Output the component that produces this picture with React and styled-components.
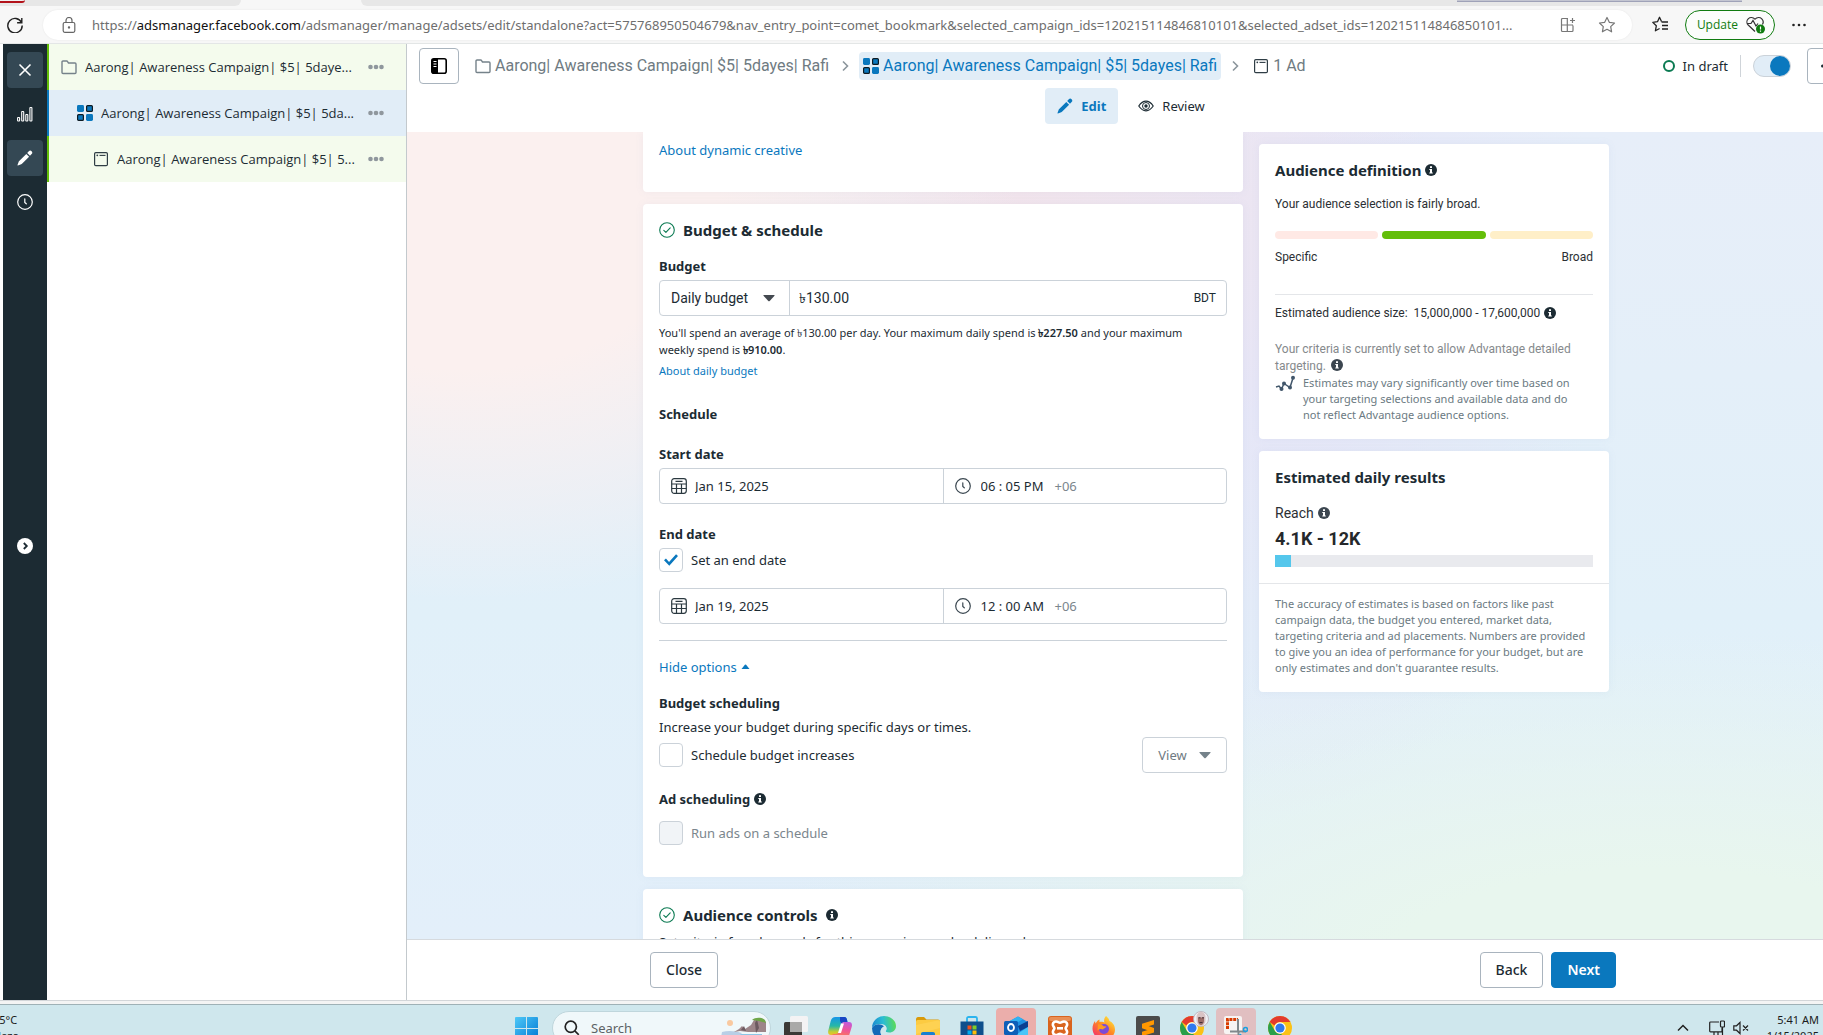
import React, { useState } from "react";
import styled, { createGlobalStyle, css } from "styled-components";

const ui = '"Noto Sans", "Open Sans", sans-serif';
const plain = 'Roboto, "Noto Sans", sans-serif';
const ink = "#1c2b33";
const muted = "#6f7b82";
const blue = "#0a78be";
const line = "#cbd2d9";

const GlobalStyle = createGlobalStyle`
  *, *::before, *::after { box-sizing: border-box; }
  body { margin: 0; background: #fff; color: ${ink}; font: 13px/20px ${ui}; overflow: hidden; }
  button, input, select { font: inherit; color: inherit; margin: 0; }
  button { cursor: pointer; }
  p, h2, h3 { margin: 0; }
  a { color: ${blue}; text-decoration: none; }
  svg { display: block; flex: none; }
`;

const Screen = styled.div`
  display: flex;
  flex-direction: column;
  height: 100vh;
  overflow: hidden;
`;

/* ---------- browser chrome ---------- */
const TabStrip = styled.div`
  display: flex;
  justify-content: space-between;
  height: 6px;
  flex: none;
  background: #f7f7f7;
`;
const TabGroup = styled.div`
  background: #e7e7e7;
  border-radius: ${(p) => (p.$end ? "0 0 0 6px" : "0 0 6px 0")};
  ${(p) => (p.$end ? "flex: 1; margin-left: 120px;" : "width: 241px;")}
  display: flex;
  justify-content: ${(p) => (p.$end ? "flex-end" : "flex-start")};
`;
const RedCorner = styled.span`
  width: 25px;
  height: 3px;
  background: #f2f2f2;
  border-bottom: 2px solid #b3131b;
  border-radius: 0 0 12px 0;
`;
const WindowEdge = styled.span`
  width: 285px;
  height: 2px;
  margin-right: 81px;
  background: #c3c5d1;
  border-bottom: 1px solid #9fa2b8;
`;
const AddressBar = styled.div`
  display: flex;
  align-items: center;
  flex: none;
  height: 38px;
  padding: 0 16px 0 7px;
  background: #f7f7f7;
  border-bottom: 1px solid #e3e6e6;
`;
const BareButton = styled.button`
  display: inline-flex;
  align-items: center;
  justify-content: center;
  padding: 0;
  border: 0;
  background: none;
`;
const UrlPill = styled.div`
  display: flex;
  align-items: center;
  flex: 1;
  min-width: 0;
  height: 30px;
  margin: 0 20px;
  padding: 0 16px 0 18px;
  border-radius: 15px;
  background: #fff;
  box-shadow: 0 0 2px rgba(0, 0, 0, 0.08);
`;
const Url = styled.div`
  flex: 1;
  margin-left: 15px;
  overflow: hidden;
  white-space: nowrap;
  color: #6e6e6e;
  b { font-weight: 400; color: #111; }
`;
const PillActions = styled.div`
  display: flex;
  gap: 22px;
`;
const UpdateButton = styled.button`
  display: flex;
  align-items: center;
  gap: 8px;
  height: 30px;
  margin: 0 16px;
  padding: 0 8px 0 11px;
  border: 1px solid #107c10;
  border-radius: 15px;
  background: #fbfdfb;
  color: #107c10;
  font: 12px/20px "Open Sans", sans-serif;
`;

/* ---------- app shell ---------- */
const Workspace = styled.div`
  display: flex;
  flex: 1;
  min-height: 0;
  padding-left: 3px;
  overflow: hidden;
`;
const Rail = styled.nav`
  display: flex;
  flex-direction: column;
  align-items: center;
  gap: 8px;
  flex: none;
  width: 44px;
  padding-top: 8px;
  background: ${ink};
`;
const RailButton = styled.button`
  display: flex;
  align-items: center;
  justify-content: center;
  width: 36px;
  height: 36px;
  padding: 0;
  border: 0;
  border-radius: 4px;
  background: ${(p) => (p.$on ? "#344854" : "transparent")};
  color: #fff;
`;
const RailSpacer = styled.div`
  flex: 0 1 292px;
`;
const Tree = styled.aside`
  flex: none;
  width: 360px;
  border-right: 1px solid #c3c9cd;
  background: #fff;
`;
const TreeRow = styled.div`
  display: flex;
  align-items: center;
  height: 46px;
  padding: 0 22px 0 ${(p) => 12 + p.$depth * 16}px;
  border-left: 2px solid ${(p) => (p.$selected ? blue : "#63be09")};
  background: ${(p) => (p.$selected ? "#e1edf7" : "#f4fbed")};
`;
const TreeName = styled.span`
  flex: 1;
  margin-left: 8px;
  min-width: 0;
  overflow: hidden;
  white-space: nowrap;
  font-family: "Open Sans", sans-serif;
`;

const Panel = styled.main`
  display: flex;
  flex-direction: column;
  flex: 1;
  min-width: 0;
  margin-right: -36px;
`;
const PanelHeader = styled.header`
  flex: none;
  padding: 4px 12px 8px;
  background: #fff;
`;
const CrumbRow = styled.div`
  display: flex;
  align-items: center;
  height: 36px;
`;
const SquareButton = styled.button`
  display: flex;
  align-items: center;
  justify-content: ${(p) => (p.$start ? "flex-start" : "center")};
  flex: none;
  width: 40px;
  height: 36px;
  padding: 0 ${(p) => (p.$start ? "12px" : "0")};
  border: 1px solid #a9b4be;
  border-radius: 4px;
  background: #fff;
`;
const Crumbs = styled.div`
  display: flex;
  align-items: center;
  gap: 8px;
  flex: 1;
  min-width: 0;
  margin-left: 12px;
`;
const Crumb = styled.a`
  display: flex;
  align-items: center;
  gap: 4px;
  height: 28px;
  padding: 0 ${(p) => (p.$current ? 4 : 2)}px 0 4px;
  border-radius: 4px;
  white-space: nowrap;
  font: 16px/28px ${plain};
  color: ${(p) => (p.$current ? blue : muted)};
  background: ${(p) => (p.$current ? "#e1edf7" : "transparent")};
`;
const Status = styled.div`
  display: flex;
  align-items: center;
  gap: 8px;
  height: 22px;
  padding-right: 12px;
  margin-right: 12px;
  border-right: 1px solid #cfd4d9;
`;
const StatusRing = styled.span`
  width: 12px;
  height: 12px;
  border: 2px solid #0b7a52;
  border-radius: 50%;
`;
const Toggle = styled.input`
  appearance: none;
  flex: none;
  display: flex;
  justify-content: flex-end;
  width: 38px;
  height: 22px;
  margin: 0 16px 0 0;
  border: 1px solid ${line};
  border-radius: 11px;
  background: #e1edf7;
  &:not(:checked) { justify-content: flex-start; }
  &::after {
    content: "";
    width: 20px;
    height: 20px;
    border-radius: 50%;
    background: ${blue};
  }
`;
const ModeRow = styled.div`
  display: flex;
  justify-content: center;
  gap: 8px;
  margin-top: 4px;
  padding-right: 4px;
`;
const ModeButton = styled.button`
  display: flex;
  align-items: center;
  gap: 8px;
  height: 36px;
  padding: 0 12px;
  border: 0;
  border-radius: 4px;
  background: ${(p) => (p.$on ? "#e1edf7" : "transparent")};
  color: ${(p) => (p.$on ? blue : ink)};
  font-weight: ${(p) => (p.$on ? 700 : 400)};
`;

const Canvas = styled.div`
  display: flex;
  justify-content: center;
  gap: 16px;
  flex: 1;
  min-height: 0;
  padding-right: 14px;
  overflow: hidden;
  background:
    radial-gradient(ellipse 560px 420px at 4% 6%, #fbf0ef 45%, rgba(251, 240, 239, 0) 100%),
    radial-gradient(ellipse 420px 260px at 42% 8%, #f2e4ec 0%, rgba(242, 228, 236, 0) 100%),
    radial-gradient(ellipse 320px 520px at 60% 20%, #e6e6f7 20%, rgba(230, 230, 247, 0) 100%),
    radial-gradient(ellipse 900px 340px at 86% 104%, #e8f6ee 30%, rgba(232, 246, 238, 0) 100%),
    linear-gradient(180deg, #e7eef9 0%, #e1f0f9 60%, #e3effa 100%);
`;
const FormColumn = styled.div`
  display: flex;
  flex-direction: column;
  gap: 12px;
  flex: none;
  width: 600px;
`;
const SideColumn = styled.aside`
  display: flex;
  flex-direction: column;
  gap: 12px;
  flex: none;
  width: 350px;
  padding-top: 12px;
`;
const Card = styled.section`
  flex: none;
  padding: ${(p) => p.$pad || "16px"};
  border-radius: ${(p) => (p.$cut ? "0 0 4px 4px" : "4px")};
  background: #fff;
  box-shadow: 0 0 8px rgba(120, 140, 190, 0.08);
`;
const CardTitle = styled.h2`
  display: flex;
  align-items: center;
  gap: ${(p) => p.$gap || 8}px;
  font: 700 15px/20px ${ui};
`;
const Label = styled.h3`
  display: flex;
  align-items: center;
  gap: 4px;
  margin-top: ${(p) => p.$top}px;
  font: 700 13px/20px ${ui};
`;
const FieldRow = styled.div`
  display: flex;
  height: 36px;
  margin-top: ${(p) => p.$top || 4}px;
  border: 1px solid ${line};
  border-radius: 4px;
`;
const FieldCell = styled.div`
  display: flex;
  align-items: center;
  gap: ${(p) => p.$gap || 8}px;
  flex: 1;
  min-width: 0;
  padding: 0 11px;
  & + & { border-left: 1px solid ${line}; }
`;
const SelectCell = styled.div`
  display: flex;
  align-items: center;
  flex: none;
  width: 130px;
  padding: 0 14px 0 11px;
  border-right: 1px solid ${line};
`;
const Select = styled.select`
  appearance: none;
  flex: 1;
  min-width: 0;
  padding: 0;
  border: 0;
  outline: 0;
  background: none;
  font: 14px/20px ${plain};
`;
const TextInput = styled.input`
  width: ${(p) => p.$width || "100%"};
  min-width: 0;
  padding: 0;
  border: 0;
  outline: 0;
  background: none;
  ${(p) => p.$plain && css`font: 14px/20px ${plain};`}
`;
const AmountCell = styled(FieldCell)`
  padding: 0 10px 0 9px;
`;
const Currency = styled.span`
  font: 12px/20px ${plain};
`;
const Zone = styled.span`
  color: #7b868d;
`;
const Note = styled.p`
  margin-top: 8px;
  padding-right: 16px;
  font-size: 11px;
  line-height: 17px;
  b { font-weight: 600; }
`;
const SmallLink = styled.a`
  display: block;
  margin-top: 4px;
  font-size: 11px;
  line-height: 18px;
`;
const Rule = styled.hr`
  height: 1px;
  margin: ${(p) => p.$top}px 0 0;
  border: 0;
  background: ${(p) => p.$color || line};
`;
const TextButton = styled.button`
  display: flex;
  align-items: center;
  gap: 4px;
  margin-top: 16px;
  padding: 0;
  border: 0;
  background: none;
  color: ${blue};
`;
const Para = styled.p`
  margin-top: ${(p) => p.$top}px;
`;
const CheckLabel = styled.label`
  display: flex;
  align-items: center;
  gap: 8px;
  flex: 1;
  margin-top: ${(p) => p.$top || 0}px;
  color: ${(p) => (p.$off ? "#7b868d" : ink)};
`;
const CheckBox = styled.input`
  appearance: none;
  display: grid;
  place-items: center;
  width: 24px;
  height: 24px;
  border: 1px solid ${line};
  border-radius: 4px;
  background: #fff;
  &:disabled { background: #f1f4f7; }
  &:checked::after {
    content: "";
    width: 14px;
    height: 12px;
    background: ${blue};
    clip-path: polygon(0 52%, 14% 38%, 36% 66%, 86% 2%, 100% 16%, 38% 98%);
  }
`;
const SplitRow = styled.div`
  display: flex;
  align-items: center;
  height: 36px;
`;
const ViewButton = styled.button`
  display: flex;
  align-items: center;
  justify-content: center;
  gap: 12px;
  width: 85px;
  height: 36px;
  border: 1px solid ${line};
  border-radius: 4px;
  background: #fff;
  color: ${muted};
`;

const PlainText = styled.p`
  display: ${(p) => (p.$flex ? "flex" : "block")};
  align-items: center;
  justify-content: ${(p) => (p.$between ? "space-between" : "flex-start")};
  gap: 4px;
  margin-top: ${(p) => p.$top}px;
  font: ${(p) => p.$size || 12}px/${(p) => p.$lh || 20}px ${plain};
  color: ${(p) => (p.$muted ? "#85898c" : "#2b2f33")};
  svg { ${(p) => !p.$flex && "display: inline-block; vertical-align: -1px; margin-left: 2px;"} }
`;
const Meter = styled.div`
  display: flex;
  gap: 4px;
  margin-top: 17px;
`;
const MeterPart = styled.span`
  flex: 1;
  height: 8px;
  border-radius: 4px;
  background: ${(p) => p.$color};
`;
const FinePrint = styled.p`
  padding-right: ${(p) => (p.$inset ? 8 : 0)}px;
  font-size: 11px;
  line-height: 16px;
  color: #6b7a82;
`;
const HintRow = styled.div`
  display: flex;
  gap: 8px;
`;
const Figure = styled.p`
  margin-top: 4px;
  font: 700 18px/24px ${plain};
  color: #25282b;
`;
const Gauge = styled.div`
  height: 12px;
  margin-top: 4px;
  background: #e9eaee;
`;
const GaugeFill = styled.div`
  width: 5%;
  height: 12px;
  background: #55c7ec;
`;
const CardFooter = styled.div`
  margin: 16px -16px 0;
  padding: 12px 16px 0;
  border-top: 1px solid #e4e6e9;
`;

const PanelFooter = styled.footer`
  display: flex;
  justify-content: center;
  flex: none;
  height: 61px;
  padding-top: 12px;
  border-top: 1px solid #d6dade;
  background: #fff;
`;
const FooterInner = styled.div`
  display: flex;
  gap: 8px;
  width: 966px;
`;
const FooterButton = styled.button`
  height: 36px;
  padding: 0 15px;
  border: 1px solid ${(p) => (p.$primary ? blue : "#a9b4be")};
  border-radius: 4px;
  background: ${(p) => (p.$primary ? blue : "#fff")};
  color: ${(p) => (p.$primary ? "#fff" : ink)};
  font: ${(p) => (p.$primary ? 600 : 500)} 14px/20px ${ui};
  margin-right: ${(p) => (p.$push ? "auto" : "0")};
`;

/* ---------- desktop taskbar ---------- */
const WindowBottom = styled.div`
  flex: none;
  height: 4px;
  background: #f4f4f4;
  border-top: 1px solid #d3d6d9;
`;
const Taskbar = styled.div`
  flex: none;
  height: 31px;
  overflow: hidden;
  background: #cfe7ed;
  border-top: 1px solid #9fb1b6;
`;
const TaskbarInner = styled.div`
  display: grid;
  grid-template-columns: 1fr auto 1fr;
  align-items: center;
  height: 46px;
`;
const Weather = styled.div`
  margin-left: -7px;
  font-size: 11px;
  line-height: 16px;
  color: #1b1b1b;
`;
const TaskCenter = styled.div`
  display: flex;
  align-items: center;
  padding-right: 6px;
`;
const SearchBox = styled.label`
  display: flex;
  align-items: center;
  gap: 11px;
  width: 219px;
  height: 34px;
  margin: 0 3px 0 14px;
  padding: 0 2px 0 11px;
  border: 1px solid #bfd6dc;
  border-radius: 17px;
  background: #f0f8fa;
  input::placeholder { color: #5d6366; opacity: 1; }
`;
const TaskApp = styled.button`
  display: flex;
  align-items: center;
  justify-content: center;
  width: 40px;
  height: 40px;
  margin: 0 2px;
  padding: 0;
  border: 0;
  border-radius: 4px;
  background: ${(p) => p.$tint || "none"};
`;
const Tray = styled.div`
  display: flex;
  align-items: center;
  justify-content: flex-end;
  padding-right: 4px;
`;
const TrayIcons = styled.div`
  display: flex;
  align-items: center;
  margin-right: 18px;
  gap: 8px;
  svg:first-child { margin-right: 10px; }
`;
const Clock = styled.div`
  text-align: right;
  font-size: 11px;
  line-height: 16px;
  color: #1b1b1b;
`;

/* ---------- icons ---------- */
const Svg = ({ s = 16, w, h, vb, children, ...rest }) => (
  <svg width={w || s} height={h || s} viewBox={vb || `0 0 ${w || s} ${h || s}`} fill="none" aria-hidden="true" {...rest}>
    {children}
  </svg>
);
const FolderIcon = () => (
  <Svg stroke="#75828a" strokeWidth="1.4" strokeLinejoin="round">
    <path d="M1 3a1 1 0 0 1 1-1h3.6c.5 0 .8.2 1 .6L7.5 4H14a1 1 0 0 1 1 1v8.5a1 1 0 0 1-1 1H2a1 1 0 0 1-1-1z" />
  </Svg>
);
const GridIcon = () => (
  <Svg>
    <rect x="0" y="0" width="7" height="7" rx="1.4" fill={blue} />
    <rect x="9.6" y=".6" width="5.8" height="5.8" rx="1" fill={blue} stroke="#0d1a22" strokeWidth="1.2" />
    <rect x=".6" y="9.6" width="5.8" height="5.8" rx="1" fill={blue} stroke="#0d1a22" strokeWidth="1.2" />
    <rect x="9" y="9" width="7" height="7" rx="1.4" fill={blue} />
  </Svg>
);
const AdIcon = () => (
  <Svg>
    <rect x="1.6" y="1.6" width="12.8" height="13" rx="1.2" stroke="#2f3d45" strokeWidth="1.2" />
    <circle cx="4.3" cy="4.3" r=".9" fill="#2f3d45" />
    <path d="M6.5 4.4h6" stroke="#2f3d45" strokeWidth="1.1" />
  </Svg>
);
const MoreDots = ({ c = "#8f979d", r = 2.3 }) => (
  <Svg>
    <g fill={c}><circle cx="2.5" cy="8" r={r} /><circle cx="8" cy="8" r={r} /><circle cx="13.5" cy="8" r={r} /></g>
  </Svg>
);
const ClockIcon = ({ c = "#3a4750" }) => (
  <Svg stroke={c} strokeWidth="1.2" strokeLinecap="round">
    <circle cx="8" cy="8" r="7.3" />
    <path d="M7.8 4.8v3.6l1.5 1.4" />
  </Svg>
);
const PencilIcon = ({ c }) => (
  <Svg>
    <path fill={c} d="M9.3 3.9 12.1 6.7 5 13.8a2 2 0 0 1-.8.5L.9 15.4a.3.3 0 0 1-.4-.4l1.2-3.2a2 2 0 0 1 .5-.8zM10.2 3 11.8 1.3a1.9 1.9 0 0 1 2.8 2.8L13 5.800z" />
  </Svg>
);
const CheckCircle = () => (
  <Svg stroke="#0b7a52" strokeWidth="1.1" strokeLinecap="round" strokeLinejoin="round">
    <circle cx="8" cy="8" r="7.3" /><path d="m4.800 8.400 2.100 2L11.200 5.800" />
  </Svg>
);
const InfoIcon = ({ c = ink }) => (
  <Svg s={12}>
    <circle cx="6" cy="6" r="6" fill={c} />
    <path d="M5 2.200h2v1.700H5zM4.300 4.900H7v3.700h.8v1H4.300v-1H5V5.900h-.7z" fill="#fff" />
  </Svg>
);
const Caret = ({ c = "#444950", up }) => (
  <Svg w={up ? 9 : 12} h={up ? 8 : 12} vb={up ? "0 0 8 8" : "0 0 12 12"}>
    {up ? <path d="M0 6 3.400 1.800a.8.800 0 0 1 1.200 0L8 6z" fill={c} />
        : <path d="M.8 3h10.400c.4 0 .5.400.3.700L6.700 9a1 1 0 0 1-1.400 0L.5 3.700C.3 3.400.4 3 .8 3z" fill={c} />}
  </Svg>
);
const CalendarIcon = () => (
  <Svg stroke="#2b3940" strokeWidth="1.2">
    <rect x=".7" y=".7" width="14.600" height="14.600" rx="2.500" />
    <path d="M4.500 3.300h7M.7 6h14.600M.7 10.500h14.600M5.500 6v9.300M10.500 6v9.300" />
  </Svg>
);
const CrumbChevron = () => (
  <Svg w={12} h={16}><path d="m4 3.500 4.500 4.500L4 12.500" stroke="#8b959c" strokeWidth="1.600" /></Svg>
);
const TrendIcon = () => (
  <Svg w={20} h={17} stroke="#41566a" strokeWidth="1.500">
    <path d="m1 12 3-1 2.500 3L9 8.500l6 4L18 3" />
    <g fill="#41566a" stroke="none"><circle cx="6.500" cy="14" r="2" /><circle cx="9" cy="8.500" r="2" /><circle cx="15" cy="12.500" r="2" /><circle cx="18" cy="2.800" r="2" /></g>
  </Svg>
);
const ChromeMark = () => (
  <>
    <circle cx="12" cy="12" r="12" fill="#fbc116" />
    <path d="M12 0a12 12 0 0 1 10.400 6H12a6 6 0 0 0-5.500 3.600L1.700 6A12 12 0 0 1 12 0z" fill="#e33b2e" />
    <path d="M1.700 5.900 7 15a6 6 0 0 0 7 2.700L11 24A12 12 0 0 1 1.700 5.900z" fill="#2a9f4b" />
    <circle cx="12" cy="12" r="5.800" fill="#fff" />
    <circle cx="12" cy="12" r="4.600" fill="#3079ee" />
  </>
);
const ChromeIcon = () => (
  <Svg s={24}><ChromeMark /></Svg>
);
const ChromeProfileIcon = () => (
  <Svg w={40} h={40}>
    <g transform="translate(8 8)"><ChromeMark /></g>
    <circle cx="29" cy="11" r="7.500" fill="#eef0f5" stroke="#b9a9b4" strokeWidth=".8" />
    <path d="M24.500 9c0-3 2-5 4.500-5s4.500 2 4.500 5v4c-.5 3-2.500 5-4.500 5s-4-2-4.500-5z" fill="#d9c3c4" />
    <path d="M26 9.500h6v3.500c0 2-1.500 4-3 4s-3-2-3-4z" fill="#9b6d68" /><path d="M26.500 9.800h2M30 9.800h2M27.500 14.500h3" stroke="#463036" />
  </Svg>
);

const treeRows = [
  { name: "Aarong| Awareness Campaign| $5| 5daye...", Icon: FolderIcon },
  { name: "Aarong| Awareness Campaign| $5| 5da...", Icon: GridIcon, selected: true },
  { name: "Aarong| Awareness Campaign| $5| 5...", Icon: AdIcon },
];

const taskApps = [
  { name: "Task view", icon: (
    <Svg s={24}><rect x="0" y="6" width="18" height="17" rx="1.500" fill="#3a3835" /><rect x="6" y="0" width="18" height="16" rx="1.500" fill="#f4f3f4" /><rect x="6" y="6" width="12" height="10" fill="#aaa9a8" /></Svg>) },
  { name: "Copilot", icon: (
    <Svg s={24}>
      <defs>
        <linearGradient id="cpA" x1="4" y1="0" x2="4" y2="20" gradientUnits="userSpaceOnUse"><stop stopColor="#1591f0" /><stop offset=".5" stopColor="#27b8a6" /><stop offset=".8" stopColor="#c9cf2f" /><stop offset="1" stopColor="#f7b42c" /></linearGradient>
        <linearGradient id="cpB" x1="20" y1="4" x2="16" y2="24" gradientUnits="userSpaceOnUse"><stop stopColor="#b45cf0" /><stop offset=".5" stopColor="#ef5498" /><stop offset="1" stopColor="#ff8a3c" /></linearGradient>
      </defs>
      <path d="M12 1h4.500c1.500 0 2 1 2.400 2.300L19.500 6h-3c-1.700 0-2.500 1-3 2.500L11.300 16c-.7 2-1.600 3-3.800 3H3C.5 19-.3 17 .3 14.500l2.500-9.700C3.500 2.300 5 1 7.500 1z" fill="url(#cpA)" />
      <path d="M12 1h4.500c1.500 0 2 1 2.400 2.300L19.500 6h-3c-1.700 0-2.200.5-3 2L12 5z" fill="#1a46c4" />
      <path d="M12 23H8c-1.800 0-2.300-1-2.700-2.300L4.500 18h3c2 0 3-1 3.600-3L13 8.500C13.500 7 14.600 6 16.500 6H21c2.500 0 3.400 2 2.800 4.500l-2.600 8.700C20.500 21.700 19 23 16.500 23z" fill="url(#cpB)" />
      <path d="m10 17 3-9.500h3L13 17z" fill="#fff" />
    </Svg>) },
  { name: "Edge", icon: (
    <Svg s={24}>
      <defs><linearGradient id="eg" x1="0" y1="12" x2="24" y2="8" gradientUnits="userSpaceOnUse"><stop stopColor="#1a86d0" /><stop offset=".5" stopColor="#2bbdd3" /><stop offset="1" stopColor="#5ddb55" /></linearGradient></defs>
      <path d="M0 12a12 12 0 0 0 18 10.400c-6 1-9.500-2.500-9.500-6.400 0-2.500 1.500-4.500 3.500-5.500C9 7 2 7.500 0 12z" fill="#1269b8" />
      <path d="M0 12C0 5 5.500 0 12 0s12 4.500 12 10c0 4-3 6.500-6.500 6.500-2.500 0-4.500-.8-4-1.800 2-2.700.7-6.700-4.500-6.700C4.500 8 1 9.500 0 12z" fill="url(#eg)" />
      <path d="M8.500 16c0-3.500 2.300-6 5-5.500 1.500 1 1.500 3 .3 4.500-.6 1 1.500 2 4 2 1.500 0 3-.5 4-1.300C20 20 15 22 12.500 21c-2.500-1-4-3-4-5z" fill="#cfe7ed" />
    </Svg>) },
  { name: "File Explorer", icon: (
    <Svg s={24}><path d="M0 3.500C0 2 .8 1 2 1h6l2.500 2.500H22c1.200 0 2 .8 2 2V8H0z" fill="#d99a0a" /><rect x="0" y="4" width="24" height="18" rx="1.500" fill="#fccb42" /><path d="M0 9 24 4v8L0 18z" fill="#ffd75e" opacity=".6" /><path d="M5 18c0-1.200.8-2 2-2h10c1.200 0 2 .8 2 2v4H5z" fill="#1a7fd0" /></Svg>) },
  { name: "Microsoft Store", icon: (
    <Svg s={24}><path d="M7 6V2.500C7 1.700 7.700 1 8.500 1h7c.8 0 1.500.7 1.500 1.500V6" stroke="#2bb4ee" strokeWidth="1.800" /><path d="M.5 5.500h23V19a4 4 0 0 1-4 4h-15a4 4 0 0 1-4-4z" fill="#0f4f8c" /><path d="M7.500 9.500h4v4h-4z" fill="#f1511b" /><path d="M12.500 9.500h4v4h-4z" fill="#80cc28" /><path d="M7.500 14.500h4v4h-4z" fill="#00adef" /><path d="M12.500 14.500h4v4h-4z" fill="#fbbc09" /></Svg>) },
  { name: "Outlook", tint: "#ebaeab", icon: (
    <Svg s={24}><path d="M4 6 14 .5 24 6v12l-10 6L4 18z" fill="#1f8fe0" /><path d="M4 6 14 .5 19 3.200 9 9z" fill="#31b2f2" /><path d="m14 10 10-5v6l-8 4z" fill="#0b3f91" /><path d="m10 20 14-9v9c0 1.500-1 3-3 3H12z" fill="#4bc5f7" /><rect x="0" y="5" width="14" height="14" rx="1.500" fill="#0f5fb8" /><ellipse cx="7" cy="11.500" rx="3" ry="3.500" stroke="#fff" strokeWidth="1.800" /></Svg>) },
  { name: "XAMPP", icon: (
    <Svg s={24}><rect width="24" height="24" rx="3" fill="#d9641e" /><rect x="1" y="1" width="22" height="4" rx="2" fill="#e98f55" /><path d="M8 5.500c1.800 0 2.500 1.300 4 1.300s2.200-1.300 4-1.300c2.500 0 3.500 2 3 4-.3 1.200-1.400 1.700-1.400 2.800s1.100 1.700 1.400 2.900c.5 2-.8 3.800-3 3.800-1.800 0-2.500-1.300-4-1.300S9.800 19 8 19c-2.200 0-3.500-1.800-3-3.800.3-1.200 1.400-1.800 1.400-2.900S5.300 10.700 5 9.500c-.5-2 .5-4 3-4z" stroke="#fff" strokeWidth="2.600" /><path d="M9 12.300h6" stroke="#fff" strokeWidth="2.600" /></Svg>) },
  { name: "Firefox", icon: (
    <Svg s={24}>
      <defs><linearGradient id="ff" x1="20" y1="2" x2="4" y2="22" gradientUnits="userSpaceOnUse"><stop stopColor="#ffe43c" /><stop offset=".45" stopColor="#ff8b22" /><stop offset="1" stopColor="#f4306d" /></linearGradient></defs>
      <path d="M14 0c2 1.500 3 3 3.500 5 2.500 1 5.500 4 5.500 8.500C23 19.500 18 24 12 24S.5 19 .5 12.500C.5 9.500 1.500 7 3 5l.5 2.500C5 5 6 4 7.500 3.500L7.500 6c2-.5 4 0 5 .5C11.500 4 12.500 1.500 14 0z" fill="url(#ff)" />
      <circle cx="12" cy="13" r="5" fill="#7b4bd8" /><path d="M6 8.500c2-.5 4 .3 5.500 1.700l3 .3c-1 2-3 1.500-3.500 3-2-1-4-.5-5.500 1z" fill="#ff9a20" />
    </Svg>) },
  { name: "Sublime Text", icon: (
    <Svg s={24}><rect width="24" height="24" rx="2" fill="#4b4b4b" /><path d="M18 4v4.500L6 12.200V7.700zM6 7.700l12 4.200v4.500L6 12.200zM18 11.900v4.500L6 20.200v-4.500z" fill="#ff9800" /></Svg>) },
  { name: "Chrome profile", icon: <ChromeProfileIcon /> },
  { name: "Snipping Tool", tint: "#e1bfc1", icon: (
    <Svg s={24}><rect x="0" y="0" width="18" height="18" rx="2" fill="#f7f4f3" /><path d="M3.500 13V3.500H14" stroke="#d83b01" strokeWidth="3" strokeDasharray="3 .8" /><path d="M14 3v12.500h8M6 15.500h9M14.500 15v8" stroke="#80888c" strokeWidth="2" /><circle cx="21.500" cy="13.500" r="2" stroke="#1aa0e0" strokeWidth="1.600" /><path d="m14 21 3-3" stroke="#1aa0e0" strokeWidth="1.600" /></Svg>) },
  { name: "Chrome", icon: <ChromeIcon /> },
];

function DateField({ id, date, time, top }) {
  return (
    <FieldRow $top={top}>
      <FieldCell>
        <CalendarIcon />
        <TextInput id={`${id}-date`} aria-label={`${id} date`} defaultValue={date} />
      </FieldCell>
      <FieldCell $gap={10}>
        <ClockIcon />
        <TextInput $width="64px" aria-label={`${id} time`} defaultValue={time} />
        <Zone>+06</Zone>
      </FieldCell>
    </FieldRow>
  );
}

export default function App() {
  const [ends, setEnds] = useState(true);
  const [boost, setBoost] = useState(false);
  const [active, setActive] = useState(true);
  return (
    <Screen>
      <GlobalStyle />
      <TabStrip>
        <TabGroup><RedCorner /></TabGroup>
        <TabGroup $end><WindowEdge /></TabGroup>
      </TabStrip>
      <AddressBar>
        <BareButton aria-label="Reload">
          <Svg stroke="#222" strokeWidth="1.400"><path d="M14.500 5.500A7.200 7.200 0 1 0 15.200 8.500M14.800 1v4.700h-4.700" /></Svg>
        </BareButton>
        <UrlPill>
          <Svg stroke="#666" strokeWidth="1.200"><rect x="2.200" y="5.500" width="11.600" height="9.800" rx="1.500" /><path d="M5 5.500V3.500a3 3 0 0 1 6 0v2" /><circle cx="8" cy="10.400" r=".6" fill="#666" /></Svg>
          <Url>https://<b>adsmanager.facebook.com</b>/adsmanager/manage/adsets/edit/standalone?act=575768950504679&amp;nav_entry_point=comet_bookmark&amp;selected_campaign_ids=120215114846810101&amp;selected_adset_ids=120215114846850101...</Url>
          <PillActions>
            <BareButton aria-label="App available">
              <Svg stroke="#777" strokeWidth="1.200"><path d="M8 1.500H2.500a1 1 0 0 0-1 1v11a1 1 0 0 0 1 1H12a1 1 0 0 0 1-1V8.500M1.500 8H13M7.300 1.500v13M12.500 1v5M10 3.500h5" /></Svg>
            </BareButton>
            <BareButton aria-label="Add to favorites">
              <Svg s={18} stroke="#777" strokeWidth="1.200" strokeLinejoin="round"><path d="m9 1.500 2.300 4.800 5.200.7-3.800 3.600.9 5.200L9 13.300l-4.600 2.500.9-5.200L1.500 7l5.200-.7z" /></Svg>
            </BareButton>
          </PillActions>
        </UrlPill>
        <BareButton aria-label="Favorites">
          <Svg s={17} stroke="#222" strokeWidth="1.300" strokeLinejoin="round"><path d="M9.500 5.500 7.500 1.300 5.500 5.700.8 6.400l3.500 3.400-.9 5 4.200-2.300M9.500 6H16M10 9.500h6M10 13h6" /></Svg>
        </BareButton>
        <UpdateButton>
          Update
          <Svg w={20} h={18} stroke="#333" strokeWidth="1.200">
            <path d="M9 15.500 2.200 9a4.400 4.400 0 0 1 0-6.200C4 1 7 1 9 3.200c2-2.200 5-2.200 6.800-.4 1.500 1.600 1.700 4 .6 5.700M.8 7.500H5L7 4.500l3 5.500 2-2.500" />
            <circle cx="14.500" cy="13" r="4.500" fill="#107c10" stroke="none" /><path d="M14.500 10.500v3M14.500 14.500v1.200" stroke="#fff" />
          </Svg>
        </UpdateButton>
        <BareButton aria-label="Settings and more"><MoreDots c="#222" r={1.3} /></BareButton>
      </AddressBar>

      <Workspace>
        <Rail>
          <RailButton $on aria-label="Close editor"><Svg stroke="#fff" strokeWidth="1.600"><path d="m2.500 2.500 11 11M13.500 2.500l-11 11" /></Svg></RailButton>
          <RailButton aria-label="Charts">
            <Svg stroke="#fff" strokeWidth="1.100"><rect x=".6" y="11.500" width="2" height="3.500" rx=".5" /><rect x="4.700" y="5.500" width="2" height="9.500" rx=".5" /><rect x="8.800" y="8.500" width="2" height="6.500" rx=".5" /><rect x="12.900" y="1.500" width="2" height="13.500" rx=".5" /></Svg>
          </RailButton>
          <RailButton $on aria-label="Edit"><PencilIcon c="#fff" /></RailButton>
          <RailButton aria-label="History"><ClockIcon c="#fff" /></RailButton>
          <RailSpacer />
          <RailButton aria-label="Expand">
            <Svg><circle cx="8" cy="8" r="8" fill="#fff" /><path d="M6.800 5 9.800 8l-3 3" stroke={ink} strokeWidth="1.800" /></Svg>
          </RailButton>
        </Rail>

        <Tree>
          {treeRows.map(({ name, Icon, selected }, i) => (
            <TreeRow key={name} $depth={i} $selected={selected}>
              <Icon />
              <TreeName>{name}</TreeName>
              <BareButton aria-label="More actions"><MoreDots /></BareButton>
            </TreeRow>
          ))}
        </Tree>

        <Panel>
          <PanelHeader>
            <CrumbRow>
              <SquareButton aria-label="Toggle list">
                <Svg><rect x=".8" y=".8" width="14.400" height="14.400" rx="2" stroke="#000" strokeWidth="1.600" /><path d="M1 1h6v14H1z" fill="#000" /><path d="M2.500 3.500h3M2.500 6h3M2.500 8.500h3" stroke="#fff" strokeWidth="1.100" /></Svg>
              </SquareButton>
              <Crumbs>
                <Crumb href="#campaign"><FolderIcon />Aarong| Awareness Campaign| $5| 5dayes| Rafi</Crumb>
                <CrumbChevron />
                <Crumb href="#adset" $current><GridIcon />Aarong| Awareness Campaign| $5| 5dayes| Rafi</Crumb>
                <CrumbChevron />
                <Crumb href="#ad"><AdIcon />1 Ad</Crumb>
              </Crumbs>
              <Status><StatusRing />In draft</Status>
              <Toggle type="checkbox" role="switch" aria-label="Ad set on" checked={active} onChange={(e) => setActive(e.target.checked)} />
              <SquareButton $start aria-label="More"><MoreDots c={ink} r={1.5} /></SquareButton>
            </CrumbRow>
            <ModeRow>
              <ModeButton $on><PencilIcon c={blue} />Edit</ModeButton>
              <ModeButton>
                <Svg stroke={ink} strokeWidth="1.200"><path d="M.8 8C3 4.700 5.300 3.200 8 3.200S13 4.700 15.200 8C13 11.300 10.700 12.800 8 12.800S3 11.300.8 8z" /><circle cx="8" cy="8" r="3.500" strokeWidth="1" /><circle cx="8" cy="8" r="1.700" fill={ink} stroke="none" /></Svg>
                Review
              </ModeButton>
            </ModeRow>
          </PanelHeader>

          <Canvas>
            <FormColumn>
              <Card $cut $pad="8px 16px 32px"><a href="#dynamic">About dynamic creative</a></Card>

              <Card $pad="16px 16px 32px">
                <CardTitle><CheckCircle />Budget &amp; schedule</CardTitle>
                <Label as="label" htmlFor="amount" $top={16}>Budget</Label>
                <FieldRow>
                  <SelectCell>
                    <Select aria-label="Budget type" defaultValue="daily">
                      <option value="daily">Daily budget</option>
                      <option value="lifetime">Lifetime budget</option>
                    </Select>
                    <Caret />
                  </SelectCell>
                  <AmountCell>
                    <TextInput $plain id="amount" defaultValue="৳130.00" />
                    <Currency>BDT</Currency>
                  </AmountCell>
                </FieldRow>
                <Note>You'll spend an average of ৳130.00 per day. Your maximum daily spend is <b>৳227.50</b> and your maximum weekly spend is <b>৳910.00</b>.</Note>
                <SmallLink href="#daily">About daily budget</SmallLink>
                <Label $top={24}>Schedule</Label>
                <Label as="label" htmlFor="Start-date" $top={20}>Start date</Label>
                <DateField id="Start" date="Jan 15, 2025" time="06 : 05 PM" />
                <Label as="label" htmlFor="End-date" $top={20}>End date</Label>
                <CheckLabel $top={4}>
                  <CheckBox type="checkbox" checked={ends} onChange={(e) => setEnds(e.target.checked)} />
                  Set an end date
                </CheckLabel>
                <DateField id="End" date="Jan 19, 2025" time="12 : 00 AM" top={16} />
                <Rule $top={16} />
                <TextButton>Hide options <Caret up c={blue} /></TextButton>
                <Label $top={16}>Budget scheduling</Label>
                <Para $top={4}>Increase your budget during specific days or times.</Para>
                <SplitRow>
                  <CheckLabel>
                    <CheckBox type="checkbox" checked={boost} onChange={(e) => setBoost(e.target.checked)} />
                    Schedule budget increases
                  </CheckLabel>
                  <ViewButton>View <Caret c="#75828a" /></ViewButton>
                </SplitRow>
                <Label $top={16}>Ad scheduling <InfoIcon /></Label>
                <CheckLabel $off $top={12}><CheckBox type="checkbox" disabled />Run ads on a schedule</CheckLabel>
              </Card>

              <Card>
                <CardTitle><CheckCircle />Audience controls <InfoIcon /></CardTitle>
                <Para $top={7}>Set criteria for where ads for this campaign can be delivered.</Para>
              </Card>
            </FormColumn>

            <SideColumn>
              <Card>
                <CardTitle $gap={4}>Audience definition <InfoIcon /></CardTitle>
                <PlainText $top={14}>Your audience selection is fairly broad.</PlainText>
                <Meter><MeterPart $color="#ffe9e5" /><MeterPart $color="#63be09" /><MeterPart $color="#ffefc8" /></Meter>
                <PlainText $flex $between $top={8}><span>Specific</span><span>Broad</span></PlainText>
                <Rule $top={27} $color="#e4e6e9" />
                <PlainText $flex $top={8}>Estimated audience size:&nbsp; 15,000,000 - 17,600,000 <InfoIcon /></PlainText>
                <PlainText $muted $lh={17} $top={18}>Your criteria is currently set to allow Advantage detailed targeting. <InfoIcon c="#3c4650" /></PlainText>
                <HintRow>
                  <TrendIcon />
                  <FinePrint $inset>Estimates may vary significantly over time based on your targeting selections and available data and do not reflect Advantage audience options.</FinePrint>
                </HintRow>
              </Card>

              <Card>
                <CardTitle>Estimated daily results</CardTitle>
                <PlainText $flex $size={14} $top={16}>Reach <InfoIcon c="#3c4650" /></PlainText>
                <Figure>4.1K - 12K</Figure>
                <Gauge><GaugeFill /></Gauge>
                <CardFooter>
                  <FinePrint>The accuracy of estimates is based on factors like past campaign data, the budget you entered, market data, targeting criteria and ad placements. Numbers are provided to give you an idea of performance for your budget, but are only estimates and don't guarantee results.</FinePrint>
                </CardFooter>
              </Card>
            </SideColumn>
          </Canvas>

          <PanelFooter>
            <FooterInner>
              <FooterButton $push>Close</FooterButton>
              <FooterButton>Back</FooterButton>
              <FooterButton $primary>Next</FooterButton>
            </FooterInner>
          </PanelFooter>
        </Panel>
      </Workspace>

      <WindowBottom />
      <Taskbar>
        <TaskbarInner>
          <Weather>15°C<br />Haze</Weather>
          <TaskCenter>
            <BareButton aria-label="Start">
              <Svg s={23}>
                <defs><linearGradient id="win" x1="0" y1="0" x2="23" y2="23" gradientUnits="userSpaceOnUse"><stop stopColor="#4fc8f7" /><stop offset="1" stopColor="#0078d4" /></linearGradient></defs>
                <path d="M0 1a1 1 0 0 1 1-1h10v11H0zM12 0h10a1 1 0 0 1 1 1v10H12zM0 12h11v11H1a1 1 0 0 1-1-1zM12 12h11v10a1 1 0 0 1-1 1H12z" fill="url(#win)" />
              </Svg>
            </BareButton>
            <SearchBox>
              <Svg stroke="#222" strokeWidth="1.700"><circle cx="6.800" cy="6.800" r="5.600" /><path d="m10.800 10.800 4 4" /></Svg>
              <TextInput type="search" aria-label="Search" placeholder="Search" />
              <Svg w={48} h={28}>
                <circle cx="10" cy="9" r="3" fill="#f9c9a0" />
                <path d="M4 20h38v4H2z" fill="#8cc7e8" /><path d="M2 18c6-2 14-1 20 1l-4 4H1z" fill="#b9cfe6" />
                <path d="M14 18l5-3 3-3 3 3 6-4 3-5 9-1 3 3v10H28l-8-1z" fill="#9d8589" /><path d="m21 16 3-4 2 5zM35 9l2-4 2 9-3 5z" fill="#6d5a60" />
                <path d="M32 6c3-3 10-3 13 0l1 3-7-2z" fill="#6fa648" /><path d="M8 23h38l-3 4H12z" fill="#74d0e4" />
              </Svg>
            </SearchBox>
            {taskApps.map((a) => (
              <TaskApp key={a.name} aria-label={a.name} $tint={a.tint}>{a.icon}</TaskApp>
            ))}
          </TaskCenter>
          <Tray>
            <TrayIcons>
              <Svg stroke="#222" strokeWidth="1.500"><path d="m3 10.500 5-5 5 5" /></Svg>
              <Svg stroke="#222" strokeWidth="1.200"><path d="M10 2H1.500a.8.800 0 0 0-.8.800V11a.8.800 0 0 0 .8.800H13V7.500M5 12v3.500M9 12v3.500M3.500 15.500h7M13.500 7v9" /><rect x="11.500" y="1" width="4" height="6" rx="1" /></Svg>
              <Svg stroke="#222" strokeWidth="1.200"><path d="M.8 5.800h2.700L7 2.500v11L3.500 10.200H.8zM10 5.500l5 5M15 5.500l-5 5" /></Svg>
            </TrayIcons>
            <Clock>5:41 AM<br />1/15/2025</Clock>
          </Tray>
        </TaskbarInner>
      </Taskbar>
    </Screen>
  );
}
